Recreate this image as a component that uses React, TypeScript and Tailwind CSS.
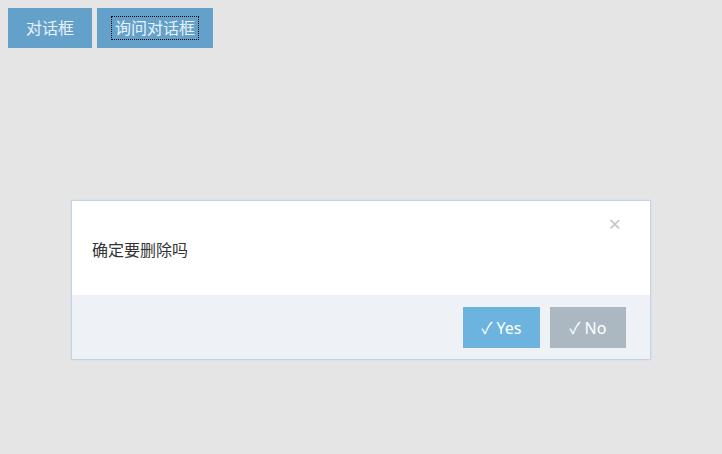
import { useState } from "react";

const font = { fontFamily: '"Segoe UI", "Noto Sans", "Noto Sans CJK SC", sans-serif' };

export default function App() {
  const [open, setOpen] = useState(true);

  return (
    <div className="relative w-[722px] h-[454px] bg-[#e5e5e5] overflow-hidden" style={font}>
      <div className="flex gap-[5px] p-2">
        <button className="h-10 px-[18px] bg-[#63a1cb] text-[#eaf1f7] text-[16px] leading-none">
          对话框
        </button>
        <button
          onClick={() => setOpen(true)}
          className="h-10 px-[15px] bg-[#63a1cb] text-[#eaf1f7] text-[16px] leading-none"
        >
          <span className="inline-block px-[3px] py-[3px] outline outline-1 outline-dotted outline-black">
            询问对话框
          </span>
        </button>
      </div>

      {open && (
        <div className="absolute left-[71px] top-[200px] w-[580px] border border-[#bcd5eb] bg-white shadow-[0_0_3px_rgba(0,0,0,0.05)]">
          <div className="relative h-[94px] px-5 pt-[37px]">
            <button
              onClick={() => setOpen(false)}
              className="absolute right-[29px] top-[11px] text-[#c6c6c6] text-[22px] leading-none"
            >
              ×
            </button>
            <p className="text-[16px] leading-6 text-[#333]">确定要删除吗</p>
          </div>
          <div className="flex justify-end gap-[10px] h-[64px] bg-[#eef1f5] pt-3 pr-6">
            <button className="w-[77px] h-[41px] bg-[#6cb3e0] text-white text-[16px] leading-none">
              ✓ Yes
            </button>
            <button
              onClick={() => setOpen(false)}
              className="w-[76px] h-[41px] bg-[#abb8c1] text-white text-[16px] leading-none"
            >
              ✓ No
            </button>
          </div>
        </div>
      )}
    </div>
  );
}
